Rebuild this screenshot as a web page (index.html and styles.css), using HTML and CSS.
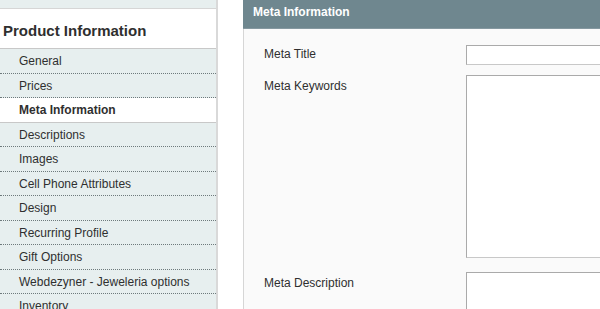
FILE: index.html
```html
<!DOCTYPE html>
<html lang="en">
<head>
  <meta charset="UTF-8">
  <title>Product Information - Meta Information</title>
  <link rel="stylesheet" href="styles.css">
</head>
<body>
  <div class="page">
    <!-- Side column with tabs -->
    <aside class="side-col">
      <div class="tab-prev"></div>
      <h3 class="side-title">Product Information</h3>
      <ul class="tabs">
        <li><a href="#">General</a></li>
        <li><a href="#">Prices</a></li>
        <li><a href="#" class="active">Meta Information</a></li>
        <li><a href="#">Descriptions</a></li>
        <li><a href="#">Images</a></li>
        <li><a href="#">Cell Phone Attributes</a></li>
        <li><a href="#">Design</a></li>
        <li><a href="#">Recurring Profile</a></li>
        <li><a href="#">Gift Options</a></li>
        <li><a href="#">Webdezyner - Jeweleria options</a></li>
        <li><a href="#">Inventory</a></li>
      </ul>
    </aside>

    <!-- Main column -->
    <main class="main-col">
      <div class="entry-edit-head">
        <h4>Meta Information</h4>
      </div>
      <fieldset class="fieldset">
        <div class="form-row">
          <label for="meta_title">Meta Title</label>
          <input type="text" id="meta_title" class="input-text">
        </div>
        <div class="form-row keywords">
          <label for="meta_keyword">Meta Keywords</label>
          <textarea id="meta_keyword" class="textarea"></textarea>
        </div>
        <div class="form-row description">
          <label for="meta_description">Meta Description</label>
          <textarea id="meta_description" class="textarea"></textarea>
        </div>
      </fieldset>
    </main>
  </div>
</body>
</html>
```

FILE: styles.css
```css
/* General */
* {
  box-sizing: border-box;
}

body {
  margin: 0;
  font: 12px "Liberation Sans", Arial, sans-serif;
  color: #2f2f2f;
  background: #fff;
  overflow: hidden;
}

.page {
  display: flex;
  align-items: stretch;
  min-height: 100vh;
}

/* Side column */
.side-col {
  width: 218px;
  flex-shrink: 0;
  border-right: 2px solid #d9d9d9;
}

.tab-prev {
  height: 9px;
  background: #e7efef;
  border-bottom: 1px solid #d6d6d6;
}

.side-title {
  margin: 0;
  height: 40px;
  padding: 4px 0 0 3px;
  line-height: 35px;
  font-size: 15px;
  font-weight: bold;
  color: #2f2f2f;
  border-bottom: 1px solid #c8c8c8;
}

.tabs {
  list-style: none;
  margin: 0;
  padding: 0;
}

.tabs a {
  display: block;
  padding: 2px 0 0 19px;
  line-height: 21.5px;
  background: #e7efef;
  color: #2f2f2f;
  text-decoration: none;
  border-bottom: 1px dotted #6e7a7c;
}

.tabs a.active {
  background: #fff;
  font-weight: bold;
  border-bottom: 1px solid #c8c8c8;
}

/* Main column */
.main-col {
  width: 480px;
  flex-shrink: 0;
  margin-left: 25px;
}

.entry-edit-head {
  height: 29px;
  padding-left: 10px;
  background: #6f878f;
  border-bottom: 1px solid #8598a0;
}

.entry-edit-head h4 {
  margin: 0;
  line-height: 24px;
  font-size: 12px;
  font-weight: bold;
  color: #fff;
}

.fieldset {
  margin: 0;
  min-height: 290px;
  padding: 16px 0 0 20px;
  border: 0;
  border-left: 1px solid #d6d6d6;
  background: #fafafa;
}

.form-row {
  display: flex;
  align-items: flex-start;
}

.form-row label {
  width: 202px;
  flex-shrink: 0;
  padding-top: 1px;
  line-height: 16px;
}

.form-row.keywords {
  margin-top: 10px;
}

.form-row.description {
  margin-top: 14px;
}

.form-row.keywords label,
.form-row.description label {
  padding-top: 3px;
}

.input-text,
.textarea {
  width: 300px;
  margin: 0;
  padding: 0;
  background: #fff;
  border: 1px solid;
  border-color: #aaa #c8c8c8 #c8c8c8 #aaa;
  font: 12px "Liberation Sans", Arial, sans-serif;
}

.input-text {
  height: 20px;
}

.textarea {
  height: 183px;
  resize: none;
}
```
